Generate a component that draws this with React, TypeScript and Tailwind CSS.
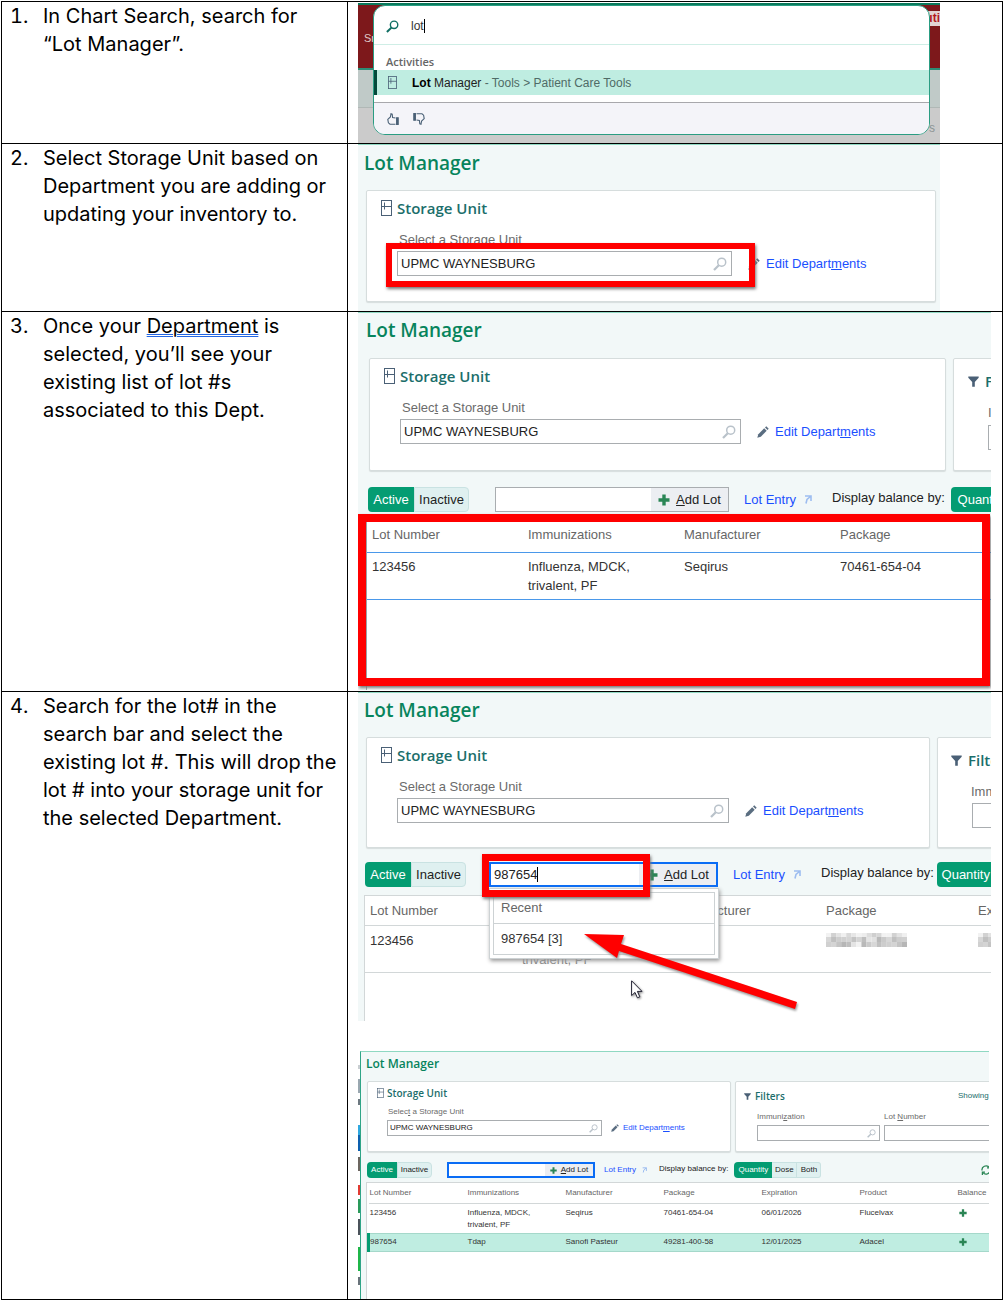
import type { ReactNode } from 'react';
import clsx from 'clsx';

/* ---------- icons ---------- */

function UnitIcon({ className }: { className: string }) {
  return (
    <svg viewBox="0 0 11 16" className={className} fill="none" stroke="#4a6076" strokeWidth="1">
      <rect x="0.5" y="0.5" width="10" height="15" />
      <path d="M0.5 6.5h10M3.5 2.5v7" />
    </svg>
  );
}

function Magnifier({ className }: { className: string }) {
  return (
    <svg viewBox="0 0 14 14" className={className} fill="none" stroke="currentColor">
      <circle cx="8.7" cy="5.2" r="4" strokeWidth="1.5" />
      <path d="M5.8 8.2 1 13" strokeWidth="2.2" />
    </svg>
  );
}

function Pencil({ className }: { className: string }) {
  return (
    <svg viewBox="0 0 12 12" className={className} fill="#5a6d80">
      <path d="M0.3 11.7 1.3 8.2 7.2 2.3 9.7 4.8 3.8 10.7Z" />
      <path d="M8 1.5 9.3 0.3 11.7 2.7 10.5 4Z" />
    </svg>
  );
}

function Funnel({ className }: { className: string }) {
  return (
    <svg viewBox="0 0 11 11" className={className} fill="#4a6076">
      <path d="M0.3 0.5h10.4v1.2L6.8 6v4.8H4.2V6L0.3 1.7Z" />
    </svg>
  );
}

function Plus({ className }: { className: string }) {
  return (
    <svg viewBox="0 0 12 12" className={className} fill="#2a8555">
      <path d="M4.3 0.5h3.4v3.8h3.8v3.4H7.7v3.8H4.3V7.7H0.5V4.3h3.8Z" />
    </svg>
  );
}

function JumpArrow({ className }: { className: string }) {
  return (
    <svg viewBox="0 0 8 9" className={className} fill="none" stroke="#9dbdf0" strokeWidth="1.6">
      <path d="M1 1h6v5M7 1 3 4.4 2 8.5" />
    </svg>
  );
}

function Thumb({ className }: { className: string }) {
  return (
    <svg viewBox="0 0 12 12" className={className} fill="none" stroke="#4a6076" strokeWidth="1.1">
      <path d="M8.5 5 5.6 4.6 5.2 1.2 4 0.8 3.4 4 0.8 6.4 1.4 9.8 3 11.2H8.5" />
      <path d="M9.6 4.8h1.6v6.6H9.6Z" fill="#4a6076" />
    </svg>
  );
}

/* ---------- shared pieces ---------- */

const arial = "font-['Liberation_Sans',Arial,sans-serif]";
const segoe = "font-['Open_Sans','Noto_Sans',sans-serif] font-semibold";

function Step({ n, text, children }: { n: number; text: ReactNode; children: ReactNode }) {
  return (
    <section className="grid grid-cols-[345fr_655fr] border-t border-black">
      <div className="flex pl-2 pr-[9px] font-['Inter','Noto_Sans',sans-serif] text-[20px] leading-[28px] text-black">
        <span className="w-[33px] shrink-0 tabular-nums">{n}.</span>
        <p>{text}</p>
      </div>
      <div className={clsx('min-w-0 border-l border-black pl-[10px]', arial)}>{children}</div>
    </section>
  );
}

function Title({ small }: { small?: boolean }) {
  return (
    <h2 className={clsx(segoe, 'text-[#07845c]', small ? 'text-[12px] leading-[16px]' : 'text-[19px] leading-[24px]')}>
      Lot Manager
    </h2>
  );
}

function Panel({ className, children }: { className: string; children?: ReactNode }) {
  return (
    <div className={clsx('rounded-[2px] border border-[#d6dddd] bg-white shadow-[0_1px_1px_#d6dddd]', className)}>
      {children}
    </div>
  );
}

function StorageUnit({ id, field, small }: { id: string; field: string; small?: boolean }) {
  return (
    <>
      <h3
        className={clsx(
          segoe,
          'flex items-center text-[#1b6e6b]',
          small ? 'gap-[3px] pl-[9px] text-[10px] leading-[12px]' : 'gap-[5px] pl-[14px] text-[15px] leading-[20px]',
        )}
      >
        <UnitIcon className={small ? 'h-[10px] w-[7px]' : 'h-4 w-[11px]'} />
        Storage Unit
      </h3>
      <label
        htmlFor={id}
        className={clsx('block text-[#6b6b6b]', small ? 'mt-2 pl-5 text-[8px] leading-[10px]' : 'mt-[14px] pl-8 text-[13px] leading-[16px]')}
      >
        Selec<u>t</u> a Storage Unit
      </label>
      <div className={clsx('mt-[3px] flex items-center', small ? 'pl-[19px]' : 'pl-[30px]')}>
        <span
          className={clsx(
            'flex items-center border border-[#a9adb0] bg-white',
            small ? 'h-4 pl-[2px] pr-[3px]' : 'h-[25px] pl-[3px] pr-1',
            field,
          )}
        >
          <input
            id={id}
            defaultValue="UPMC WAYNESBURG"
            className={clsx('w-full min-w-0 text-[#222] outline-none', small ? 'text-[8px]' : 'text-[13px]')}
          />
          <Magnifier className={clsx('shrink-0 text-[#b9c2ca]', small ? 'h-[9px] w-[9px]' : 'h-[14px] w-[14px]')} />
        </span>
        <Pencil className={small ? 'ml-[9px] mr-1 h-[8px] w-[8px]' : 'ml-4 mr-[6px] h-3 w-3'} />
        <a href="#departments" className={clsx('text-[#1a4fff]', small ? 'text-[8px]' : 'text-[13px]')}>
          Edit Depart<u>m</u>ents
        </a>
      </div>
    </>
  );
}

function Toolbar({
  id,
  small,
  tight,
  focused,
  value = '',
  group,
  menu,
  children,
}: {
  id: string;
  small?: boolean;
  tight?: boolean;
  focused?: boolean;
  value?: string;
  group: string;
  menu?: ReactNode;
  children?: ReactNode;
}) {
  return (
    <div className={clsx('flex items-center whitespace-nowrap text-[#222]', small ? 'h-4 text-[8px]' : 'h-[25px] text-[13px]')}>
      <button type="button" className={clsx('h-full shrink-0 rounded-l-[4px] bg-[#049c72] text-white', small ? 'w-[30px]' : 'w-[46px]')}>
        Active
      </button>
      <button
        type="button"
        className={clsx('h-full shrink-0 rounded-r-[4px] border border-[#c9e2e2] bg-[#dff0f0]', small ? 'w-[35px]' : 'w-[55px]')}
      >
        Inactive
      </button>
      <div
        className={clsx(
          'relative flex h-full shrink-0 bg-white',
          focused ? 'border-2 border-[#0a6cf5]' : 'border border-[#a9adb0]',
          group,
        )}
      >
        <input
          id={id}
          aria-label="Lot to add"
          defaultValue={value}
          className={clsx('w-0 min-w-0 grow outline-none', small ? 'pl-1' : 'pl-[3px]')}
        />
        <button
          type="button"
          className={clsx('flex items-center justify-center bg-[#eceef2]', small ? 'w-[48px] gap-1' : 'w-[77px] gap-[6px]')}
        >
          <Plus className={small ? 'h-[7px] w-[7px]' : 'h-3 w-3'} />
          <span>
            <u>A</u>dd Lot
          </span>
        </button>
        {menu}
      </div>
      <a href="#entry" className={clsx('text-[#1a4fff]', small ? 'ml-[9px]' : 'ml-[15px]')}>
        Lot Entry
      </a>
      <JumpArrow className={clsx('shrink-0', small ? 'ml-[6px] h-[6px] w-[5px]' : 'ml-2 h-[9px] w-2')} />
      <span className={small ? 'ml-3 pb-[2px]' : 'ml-5 pb-1'}>Display balance by:</span>
      <button
        type="button"
        className={clsx(
          'h-full shrink-0 rounded-l-[4px] bg-[#049c72] text-white',
          small && 'ml-[6px] w-[38px]',
          tight && 'ml-[3px] w-[58px]',
          !small && !tight && 'ml-[6px] w-[62px]',
        )}
      >
        Quantity
      </button>
      {children}
    </div>
  );
}

function Highlight({ className }: { className: string }) {
  return <div className={clsx('pointer-events-none absolute border-[#ff0000] shadow-[1px_2px_3px_#777]', className)} />;
}

/* ---------- step 1: chart search ---------- */

function ChartSearch() {
  return (
    <div className="relative mr-[62px] mt-px overflow-hidden">
      <div className="flex h-[67px] items-center justify-between border-b-2 border-t-2 border-b-[#2e8d76] border-t-[#0a7a5c] bg-[#7d181b] text-[11px] text-[#e0c8c8]">
        <span className="pl-[6px] pt-1">Sn</span>
        <span className="mb-9 bg-[#e2d3d3] pl-3 text-[12px] font-bold leading-[15px] text-[#b3191e]">uti</span>
      </div>
      <div className="h-[38px] border-b border-[#b0b8b6] bg-[#c0cac8]" />
      <div className="flex h-[35px] items-center justify-end bg-[#cbcbcb] pb-2 pr-[5px] pt-3 text-[12px] text-[#8c9494]">s</div>
      <div className="absolute left-[15px] right-[10px] top-[2px] overflow-hidden rounded-[12px] border border-[#2a9d83] bg-white">
        <div className="flex h-[39px] items-center gap-3 border-b border-[#cfeee6] pl-3 pt-[2px] text-[12px]">
          <Magnifier className="h-[13px] w-[13px] text-[#0f6e63]" />
          <input aria-label="Chart search" defaultValue="lot" className="h-[14px] w-[14px] border-r border-black text-[#333] outline-none" />
        </div>
        <h3 className="pl-3 pt-2 font-['Open_Sans',sans-serif] text-[11px] font-semibold leading-[17px] text-[#666]">Activities</h3>
        <div className="flex h-[25px] items-center border-l-[3px] border-[#04493b] bg-[#bfede1] pl-[11px] text-[12px] text-[#4f6b66]">
          <UnitIcon className="mr-[15px] h-[13px] w-[9px]" />
          <p>
            <b className="text-black">Lot</b> <span className="text-[#222]">Manager</span> - Tools &gt; Patient Care Tools
          </p>
        </div>
        <div className="mt-[7px] flex h-[32px] items-center gap-[14px] border-t border-[#a8a8ac] bg-[#f4f4f9] pl-[13px]">
          <button type="button" aria-label="Helpful">
            <Thumb className="h-3 w-3" />
          </button>
          <button type="button" aria-label="Not helpful">
            <Thumb className="h-3 w-3 rotate-180" />
          </button>
        </div>
      </div>
    </div>
  );
}

/* ---------- step 2: storage unit ---------- */

function PickUnit() {
  return (
    <div className="relative mr-[62px] border-t border-[#8fd8c2] bg-[#f2f8f8] pb-[9px] pl-[6px] pt-[6px]">
      <Title />
      <Panel className="ml-[2px] mr-1 mt-[15px] pb-[25px] pt-[7px]">
        <StorageUnit id="unit-2" field="w-[335px]" />
      </Panel>
      <Highlight className="left-7 top-[98px] h-[44px] w-[369px] border-[6px]" />
    </div>
  );
}

/* ---------- step 3: existing lots ---------- */

function ExistingLots() {
  return (
    <div className="relative mb-px mr-[11px] overflow-hidden border-t border-[#8fd8c2] bg-[#f2f8f8] pl-2 pt-[5px]">
      <Title />
      <div className="mt-4 flex gap-[7px] pl-[3px]">
        <Panel className="w-[577px] shrink-0 pb-[26px] pt-[7px]">
          <StorageUnit id="unit-3" field="w-[341px]" />
        </Panel>
        <Panel className="w-[480px] shrink-0 pt-3">
          <h3 className={clsx(segoe, 'flex items-center gap-[6px] pl-[14px] text-[15px] leading-[20px] text-[#1b6e6b]')}>
            <Funnel className="h-[11px] w-[11px]" />
            Filters
          </h3>
          <label htmlFor="imm-3" className="mt-[14px] block pl-[34px] text-[13px] leading-[16px] text-[#6b6b6b]">
            Immuni<u>z</u>ation
          </label>
          <input id="imm-3" className="ml-[34px] mt-1 block h-[25px] w-[180px] border border-[#a9adb0] bg-white" />
        </Panel>
      </div>
      <div className="pb-[2px] pl-[2px] pt-4">
        <Toolbar id="lot-3" group="ml-[26px] w-[234px]" />
      </div>
      <div className="h-[176px] w-[800px] border-l border-[#9aa3a8] bg-white">
        <table className="w-full table-fixed text-left text-[13px] leading-[19px] text-[#333]">
          <thead>
            <tr className="h-[38px] border-b border-[#4a98ea] text-[#666]">
              <th className="w-[156px] pl-[5px] pt-1 font-normal">Lot Number</th>
              <th className="w-[156px] pl-[5px] pt-1 font-normal">Immunizations</th>
              <th className="w-[156px] pl-[5px] pt-1 font-normal">Manufacturer</th>
              <th className="pl-[5px] pt-1 font-normal">Package</th>
            </tr>
          </thead>
          <tbody>
            <tr className="h-[47px] border-b border-[#4a98ea] align-top">
              <td className="pl-[5px] pt-1">123456</td>
              <td className="pl-[5px] pt-1">
                Influenza, MDCK,
                <br />
                trivalent, PF
              </td>
              <td className="pl-[5px] pt-1">Seqirus</td>
              <td className="pl-[5px] pt-1">70461-654-04</td>
            </tr>
          </tbody>
        </table>
      </div>
      <Highlight className="left-0 right-px top-[201px] h-[172px] border-8" />
    </div>
  );
}

/* ---------- step 4: add by number ---------- */

const shades = [225, 205, 190, 215, 196, 185, 208, 228, 192, 182, 202, 212];

// Mosaic that hides a value in the table
function Redacted({ cols, className }: { cols: number; className: string }) {
  const cells = Array.from({ length: cols * 3 }, (_, i) => i);
  return (
    <svg viewBox={`0 0 ${cols * 5} 14`} className={className} preserveAspectRatio="none">
      {cells.map((i) => {
        const x = i % cols;
        const y = Math.floor(i / cols);
        const v = Math.min(242, shades[(x * 5 + y * 3) % 12] + (y === 0 ? 25 : 0) + (x === 6 ? 30 : 0));
        return <rect key={i} x={x * 5} y={y * 5 - 1} width="5" height="5" fill={`rgb(${v},${v},${v})`} />;
      })}
    </svg>
  );
}

function RecentMenu() {
  return (
    <>
      <span className="absolute left-[46px] top-[3px] h-[15px] w-px bg-black" />
      <div className="absolute -left-[2px] top-[24px] w-[230px] border border-[#cdd2d4] bg-white p-[3px] shadow-[1px_2px_4px_#999]">
        <ul className="border border-[#cdd2d4] leading-[30px] text-[#333]">
          <li className="border-b border-[#cdd2d4] pl-[7px] text-[#666]">Recent</li>
          <li className="pl-[7px]">987654 [3]</li>
        </ul>
      </div>
    </>
  );
}

function AddLot() {
  return (
    <div className="relative mr-[11px] overflow-hidden border-t border-[#8fd8c2] bg-[#f2f8f8] pl-[6px] pt-[5px]">
      <Title />
      <div className="mt-[15px] flex gap-[7px] pl-[2px]">
        <Panel className="w-[564px] shrink-0 pb-6 pt-[7px]">
          <StorageUnit id="unit-4" field="w-[332px]" />
        </Panel>
        <Panel className="w-[480px] shrink-0 pt-3">
          <h3 className={clsx(segoe, 'flex items-center gap-[6px] pl-[13px] text-[15px] leading-[20px] text-[#1b6e6b]')}>
            <Funnel className="h-[11px] w-[11px]" />
            Filters
          </h3>
          <label htmlFor="imm-4" className="mt-[14px] block pl-[33px] text-[13px] leading-[16px] text-[#6b6b6b]">
            Immuni<u>z</u>ation
          </label>
          <input id="imm-4" className="ml-[34px] mt-[3px] block h-[25px] w-[180px] border border-[#a9adb0] bg-white" />
        </Panel>
      </div>
      <div className="pb-2 pl-px pt-[14px]">
        <Toolbar id="lot-4" tight focused value="987654" group="ml-[23px] w-[229px]" menu={<RecentMenu />} />
      </div>
      <div className="h-[126px] w-[800px] border-l border-t border-[#d2d7d8] bg-white">
        <table className="w-full table-fixed text-left text-[13px] leading-[19px] text-[#333]">
          <thead>
            <tr className="h-[29px] border-b border-[#d2d7d8] text-[#666]">
              <th className="w-[152px] pl-[5px] font-normal">Lot Number</th>
              <th className="w-[152px] pl-[5px] font-normal">Immunizations</th>
              <th className="w-[152px] pl-[5px] font-normal">Manufacturer</th>
              <th className="w-[152px] pl-[5px] font-normal">Package</th>
              <th className="pl-[5px] font-normal">Expiration</th>
            </tr>
          </thead>
          <tbody>
            <tr className="h-[47px] border-b border-[#d2d7d8] align-top">
              <td className="pl-[5px] pt-[5px]">123456</td>
              <td className="pl-[5px] pt-[5px] text-[#888]">
                Influenza, MDCK,
                <br />
                trivalent, PF
              </td>
              <td className="pl-[5px] pt-[5px]">Seqirus</td>
              <td className="pl-[5px] pt-[7px]">
                <Redacted cols={16} className="h-[14px] w-[81px]" />
              </td>
              <td className="pl-[5px] pt-[7px]">
                <Redacted cols={13} className="h-[14px] w-[65px]" />
              </td>
            </tr>
          </tbody>
        </table>
      </div>
      <Highlight className="left-[124px] top-[161px] h-[43px] w-[168px] border-[7px]" />
      <svg viewBox="0 0 222 84" className="absolute left-[222px] top-[237px] h-[84px] w-[222px] drop-shadow-[1px_2px_1px_#999]" fill="#ff0000">
        <path d="M4 4 44 5 41 14 217 72 215 79 39 21 37 28Z" />
      </svg>
      <svg viewBox="0 0 12 19" className="absolute left-[273px] top-[287px] h-[19px] w-3 drop-shadow-[1px_1px_1px_#888]">
        <path d="M0.6 0.8V15.6L4 12.4 6.4 17.8 8.8 16.8 6.4 11.4H11Z" fill="#fff" stroke="#223" strokeWidth="1" />
      </svg>
    </div>
  );
}

/* ---------- step 4: result ---------- */

const heads = ['Lot Number', 'Immunizations', 'Manufacturer', 'Package', 'Expiration', 'Product', 'Balance'];

// Slivers of the desktop icons left of the window: [y, height, colour]
const strip: [number, number, string][] = [
  [14, 4, '#c9ced2'],
  [28, 14, '#9aa7b0'],
  [48, 6, '#6d7880'],
  [74, 10, '#2fa8e0'],
  [84, 16, '#0d5fae'],
  [106, 14, '#6c6660'],
  [134, 10, '#e23a32'],
  [148, 14, '#2a9a5a'],
  [168, 16, '#4b525a'],
  [196, 24, '#1fb648'],
  [226, 8, '#69737a'],
];

function Result() {
  return (
    <div className="mr-[13px] mt-[30px] flex">
      <svg viewBox="0 0 2 248" className="h-[248px] w-[2px] shrink-0">
        {strip.map(([y, h, c]) => (
          <rect key={y} x="0" y={y} width="2" height={h} fill={c} />
        ))}
      </svg>
      <div className="min-w-0 grow overflow-hidden border-l border-t border-l-[#2fa587] border-t-[#8fd8c2] bg-[#f2f8f8] pl-[5px] pt-1">
        <Title small />
        <div className="mt-[9px] flex gap-[4px] pl-px">
          <Panel className="w-[364px] shrink-0 pb-[15px] pt-[5px]">
            <StorageUnit id="unit-5" field="w-[215px]" small />
          </Panel>
          <Panel className="w-[400px] shrink-0 pt-2">
            <div className="flex items-center pl-2 text-[#1b6e6b]">
              <Funnel className="h-[7px] w-[7px]" />
              <h3 className={clsx(segoe, 'w-[207px] pl-1 text-[10px] leading-[12px]')}>Filters</h3>
              <span className="text-[8px]">Showing 2 of 2</span>
            </div>
            <div className="flex gap-1 pl-[21px] pt-[10px] text-[8px] leading-[10px] text-[#6b6b6b]">
              <label className="w-[123px]">
                Immuni<u>z</u>ation
                <span className="mt-[3px] flex h-4 items-center border border-[#a9adb0] bg-white pr-[3px]">
                  <input className="w-full min-w-0 outline-none" />
                  <Magnifier className="h-[9px] w-[9px] shrink-0 text-[#b9c2ca]" />
                </span>
              </label>
              <label className="w-[123px]">
                Lot <u>N</u>umber
                <input className="mt-[3px] block h-4 w-full border border-[#a9adb0] bg-white" />
              </label>
            </div>
          </Panel>
        </div>
        <div className="pb-1 pl-px pt-[10px]">
          <Toolbar id="lot-5" small focused group="ml-[15px] w-[148px]">
            <button type="button" className="h-full w-[25px] shrink-0 border-y border-r border-[#c9e2e2] bg-[#dff0f0]">
              Dose
            </button>
            <button type="button" className="h-full w-6 shrink-0 rounded-r-[3px] border-y border-r border-[#c9e2e2] bg-[#dff0f0]">
              Both
            </button>
            <svg viewBox="0 0 10 10" className="ml-40 h-[10px] w-[10px] shrink-0" fill="none" stroke="#2a8555" strokeWidth="1.3">
              <path d="M1 5.5A4 4 0 0 1 8 2.3M9 4.5A4 4 0 0 1 2 7.7" />
              <path d="M8.6 0v2.8H6M1.4 10V7.2H4" />
            </svg>
          </Toolbar>
        </div>
        <div className="h-[117px] w-[688px] border-l border-t border-[#d2d7d8] bg-white">
          <table className="w-full table-fixed text-left text-[8px] leading-[12px] text-[#333]">
            <thead>
              <tr className="h-5 border-b border-[#d2d7d8] text-[#666]">
                {heads.map((h) => (
                  <th key={h} className="w-[98px] pl-px font-normal">
                    {h}
                  </th>
                ))}
              </tr>
            </thead>
            <tbody>
              <tr className="h-[30px] align-top">
                <td className="pl-px pt-[3px]">123456</td>
                <td className="pl-px pt-[3px]">
                  Influenza, MDCK,
                  <br />
                  trivalent, PF
                </td>
                <td className="pl-px pt-[3px]">Seqirus</td>
                <td className="pl-px pt-[3px]">70461-654-04</td>
                <td className="pl-px pt-[3px]">06/01/2026</td>
                <td className="pl-px pt-[3px]">Flucelvax</td>
                <td className="pl-[2px] pt-[5px]">
                  <Plus className="h-2 w-2" />
                </td>
              </tr>
              <tr className="h-[18px] border-y border-[#a5d8ca] bg-[#bfede1]">
                <td className="border-l-[3px] border-l-[#049c72]">987654</td>
                <td className="pl-px">Tdap</td>
                <td className="pl-px">Sanofi Pasteur</td>
                <td className="pl-px">49281-400-58</td>
                <td className="pl-px">12/01/2025</td>
                <td className="pl-px">Adacel</td>
                <td className="pl-[2px]">
                  <Plus className="h-2 w-2" />
                </td>
              </tr>
            </tbody>
          </table>
        </div>
      </div>
    </div>
  );
}

export default function App() {
  return (
    <main className="bg-white p-px">
      <div className="border-x border-b border-black">
        <Step n={1} text="In Chart Search, search for “Lot Manager”.">
          <ChartSearch />
        </Step>
        <Step n={2} text="Select Storage Unit based on Department you are adding or updating your inventory to.">
          <PickUnit />
        </Step>
        <Step
          n={3}
          text={
            <>
              Once your <span className="underline decoration-[#2266e3] decoration-double decoration-1">Department</span> is selected,
              you’ll see your existing list of lot #s associated to this Dept.
            </>
          }
        >
          <ExistingLots />
        </Step>
        <Step
          n={4}
          text="Search for the lot# in the search bar and select the existing lot #. This will drop the lot # into your storage unit for the selected Department."
        >
          <AddLot />
          <Result />
        </Step>
      </div>
    </main>
  );
}
